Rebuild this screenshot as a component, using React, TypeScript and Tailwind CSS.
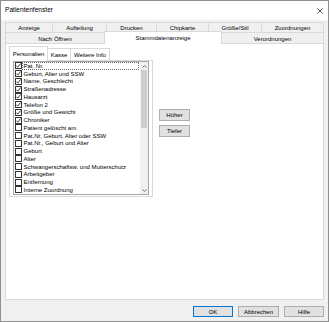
const FONT = "font-['Liberation_Sans',Arial,sans-serif]"

const ITEMS: { label: string; checked: boolean }[] = [
  { label: "Pat. Nr.", checked: true },
  { label: "Geburt, Alter und SSW", checked: true },
  { label: "Name, Geschlecht", checked: true },
  { label: "Straßenadresse", checked: true },
  { label: "Hausarzt", checked: true },
  { label: "Telefon 2", checked: true },
  { label: "Größe und Gewicht", checked: true },
  { label: "Chroniker", checked: true },
  { label: "Patient gelöscht am", checked: false },
  { label: "Pat.Nr, Geburt, Alter oder SSW", checked: false },
  { label: "Pat.Nr., Geburt und Alter", checked: false },
  { label: "Geburt", checked: false },
  { label: "Alter", checked: false },
  { label: "Schwangerschaftsw. und Mutterschutz", checked: false },
  { label: "Arbeitgeber", checked: false },
  { label: "Entfernung", checked: false },
  { label: "Interne Zuordnung", checked: false },
]

function Check({ on }: { on: boolean }) {
  return (
    <div className="flex h-[7px] w-[7px] shrink-0 items-center justify-center border border-[#333] bg-white">
      {on ? (
        <svg width="5" height="5" viewBox="0 0 5 5" aria-hidden>
          <polyline points="0.3,2.6 1.8,4.1 4.7,0.5" fill="none" stroke="#222" strokeWidth="0.9" />
        </svg>
      ) : null}
    </div>
  )
}

function Chevron({ up }: { up?: boolean }) {
  return (
    <svg width="5" height="3" viewBox="0 0 5 3" aria-hidden>
      <polyline
        points={up ? "0.5,2.5 2.5,0.6 4.5,2.5" : "0.5,0.5 2.5,2.4 4.5,0.5"}
        fill="none"
        stroke="#606060"
        strokeWidth="0.9"
      />
    </svg>
  )
}

function Btn({ label, className }: { label: string; className: string }) {
  return (
    <div
      className={`flex items-center justify-center border bg-[#e1e1e1] text-[6px] leading-none text-black ${className}`}
    >
      {label}
    </div>
  )
}

const tab = "flex items-center justify-center border-[#d9d9d9] text-[6px] leading-none text-black"

export default function App() {
  return (
    <div
      className={`flex h-[322px] w-[329px] flex-col border border-[#8f8f8f] bg-[#f0f0f0] ${FONT}`}
    >
      {/* title bar */}
      <div className="flex h-[19px] shrink-0 items-center justify-between bg-white pl-[4px] pr-[5px]">
        <span className="text-[6.6px] leading-none text-black">Patientenfenster</span>
        <svg width="6" height="6" viewBox="0 0 6 6" aria-hidden>
          <path d="M0.3 0.3L5.7 5.7M5.7 0.3L0.3 5.7" stroke="#333" strokeWidth="0.8" />
        </svg>
      </div>

      <div className="mt-[2px] flex flex-col px-[4px]">
        {/* outer tabs, back row */}
        <div className="flex h-[10px]">
          <div className={`${tab} w-[47px] border-l border-t`}>Anzeige</div>
          <div className={`${tab} w-[54px] border-l border-t`}>Aufteilung</div>
          <div className={`${tab} w-[50px] border-l border-t`}>Drucken</div>
          <div className={`${tab} w-[52px] border-l border-t`}>Chipkarte</div>
          <div className={`${tab} w-[53px] border-l border-t`}>Größe/Stil</div>
          <div className={`${tab} flex-1 border-x border-t`}>Zuordnungen</div>
        </div>
        {/* outer tabs, front row */}
        <div className="flex h-[11px]">
          <div className={`${tab} w-[99px] border-l border-t pt-[1px]`}>Nach Öffnen</div>
          <div
            className={`${tab} relative z-10 -mt-[1px] h-[13px] w-[118px] self-start border-x border-t bg-white pb-[1px]`}
          >
            Stammdatenanzeige
          </div>
          <div className={`${tab} flex-1 border-r border-t pt-[1px]`}>Verordnungen</div>
        </div>

        {/* tab page */}
        <div className="flex h-[257px] border border-[#d9d9d9] bg-white pl-[3px] pt-[2px]">
          <div className="flex w-[144px] flex-col">
            <div className="flex h-[14px] items-end">
              <div
                className={`${tab} relative z-10 h-[15px] w-[39px] self-start border-x border-t bg-white pb-[1px]`}
              >
                Personalien
              </div>
              <div className={`${tab} h-[12px] w-[23px] border-r border-t`}>Kasse</div>
              <div className={`${tab} h-[12px] w-[39px] border-r border-t`}>Weitere Info</div>
            </div>
            <div className="h-[137px] border border-[#d9d9d9] pl-[3px]">
              <div className="flex h-[134px] w-[136px] overflow-hidden border border-[#a6a6a6] bg-white">
                <div className="flex flex-1 flex-col overflow-hidden">
                  {ITEMS.map((it, i) => (
                    <div key={it.label} className="flex h-[7.75px] shrink-0 items-center pl-[0.5px]">
                      <Check on={it.checked} />
                      <div
                        className={`ml-[0.5px] mr-[1px] flex h-full flex-1 items-center whitespace-nowrap border pl-[0.5px] text-[6px] leading-none text-black ${
                          i === 0 ? "border-dotted border-[#6a6a6a]" : "border-transparent"
                        }`}
                      >
                        {it.label}
                      </div>
                    </div>
                  ))}
                </div>
                {/* scrollbar */}
                <div className="flex w-[8px] shrink-0 flex-col bg-[#f0f0f0]">
                  <div className="flex h-[8px] items-center justify-center">
                    <Chevron up />
                  </div>
                  <div className="mx-[1px] h-[58px] bg-[#cdcdcd]" />
                  <div className="flex-1" />
                  <div className="flex h-[8px] items-center justify-center">
                    <Chevron />
                  </div>
                </div>
              </div>
            </div>
          </div>

          <div className="ml-[6px] flex flex-col gap-[4px] pt-[63px]">
            <Btn label="Höher" className="h-[12px] w-[31px] border-[#adadad]" />
            <Btn label="Tiefer" className="h-[12px] w-[31px] border-[#adadad]" />
          </div>
        </div>

        {/* dialog buttons */}
        <div className="flex h-[21px] justify-end gap-[5px] pt-[6px]">
          <Btn label="OK" className="h-[11px] w-[40px] border-[#0078d7]" />
          <Btn label="Abbrechen" className="h-[11px] w-[41px] border-[#adadad]" />
          <Btn label="Hilfe" className="h-[11px] w-[40px] border-[#adadad]" />
        </div>
      </div>
    </div>
  )
}
